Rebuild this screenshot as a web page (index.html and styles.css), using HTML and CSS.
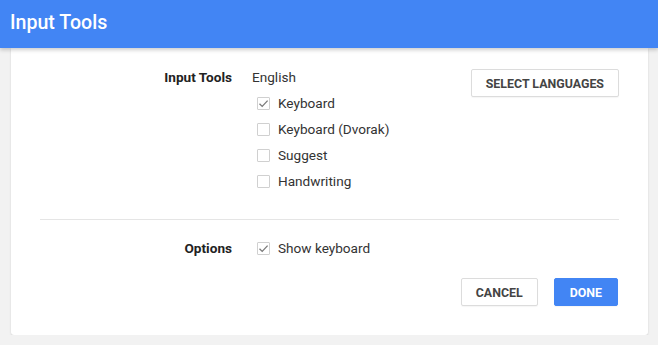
FILE: index.html
```html
<!DOCTYPE html>
<html lang="en">
<head>
    <meta charset="UTF-8">
    <title>Input Tools</title>
    <link rel="stylesheet" href="styles.css">
</head>
<body>
    <div class="header">Input Tools</div>

    <div class="card">
        <div class="section">
            <div class="label">Input Tools</div>
            <div class="options">
                <div class="row">English</div>
                <div class="row">
                    <span class="box checked"><svg viewBox="0 0 13 13" width="13" height="13"><path d="M2.5 6.8 L5.2 9.4 L10.6 3.6" fill="none" stroke="#7a7a7a" stroke-width="1.3"/></svg></span>
                    Keyboard
                </div>
                <div class="row"><span class="box"></span>Keyboard (Dvorak)</div>
                <div class="row"><span class="box"></span>Suggest</div>
                <div class="row"><span class="box"></span>Handwriting</div>
            </div>
            <div class="side">
                <button class="btn">Select languages</button>
            </div>
        </div>

        <div class="divider"></div>

        <div class="section">
            <div class="label">Options</div>
            <div class="options">
                <div class="row">
                    <span class="box checked"><svg viewBox="0 0 13 13" width="13" height="13"><path d="M2.5 6.8 L5.2 9.4 L10.6 3.6" fill="none" stroke="#7a7a7a" stroke-width="1.3"/></svg></span>
                    Show keyboard
                </div>
            </div>
        </div>

        <div class="actions">
            <button class="btn">Cancel</button>
            <button class="btn primary">Done</button>
        </div>
    </div>
</body>
</html>
```

FILE: styles.css
```css
body {
    margin: 0;
    background-color: #f2f2f2;
    font-family: Roboto, "Liberation Sans", Arial, sans-serif;
    font-size: 13.6px;
    color: #333;
}

.header {
    position: relative;
    z-index: 2;
    height: 48px;
    line-height: 46px;
    padding-left: 10px;
    background-color: #4285f4;
    color: #fff;
    font-size: 19.6px;
    font-weight: 500;
    box-shadow: 0 2px 4px rgba(0, 0, 0, 0.2);
}

.card {
    margin: 0 10px 0 11px;
    padding: 16px 29px 29px 29px;
    background-color: #fff;
    border-radius: 0 0 3px 3px;
    box-shadow: 0 1px 2px rgba(0, 0, 0, 0.15);
}

.section {
    display: grid;
    grid-template-columns: 192px 1fr auto;
    column-gap: 20px;
}

.label {
    text-align: right;
    font-weight: bold;
    color: #222;
    line-height: 26px;
}

.row {
    display: flex;
    align-items: center;
    height: 26px;
}

.box {
    display: inline-block;
    box-sizing: border-box;
    width: 13px;
    height: 13px;
    margin: 0 8px 0 5px;
    border: 1px solid #d0d0d0;
    border-radius: 1px;
    position: relative;
}

.box svg {
    position: absolute;
    left: -1px;
    top: -1px;
}

.side {
    padding-top: 5px;
}

.btn {
    height: 28px;
    padding: 0 14px;
    background-color: #fff;
    border: 1px solid #dcdcdc;
    border-radius: 2px;
    font-family: Roboto, "Liberation Sans", Arial, sans-serif;
    font-size: 12.4px;
    font-weight: bold;
    text-transform: uppercase;
    color: #444;
    box-shadow: 0 1px 1px rgba(0, 0, 0, 0.04);
}

.btn.primary {
    background-color: #4285f4;
    border-color: #4285f4;
    color: #fff;
    padding: 0 15px;
}

.divider {
    height: 1px;
    background-color: #e5e5e5;
    margin: 25px 0 15px 0;
}

.actions {
    display: flex;
    justify-content: flex-end;
    gap: 16px;
    margin-top: 17px;
    padding-right: 1px;
}
```
